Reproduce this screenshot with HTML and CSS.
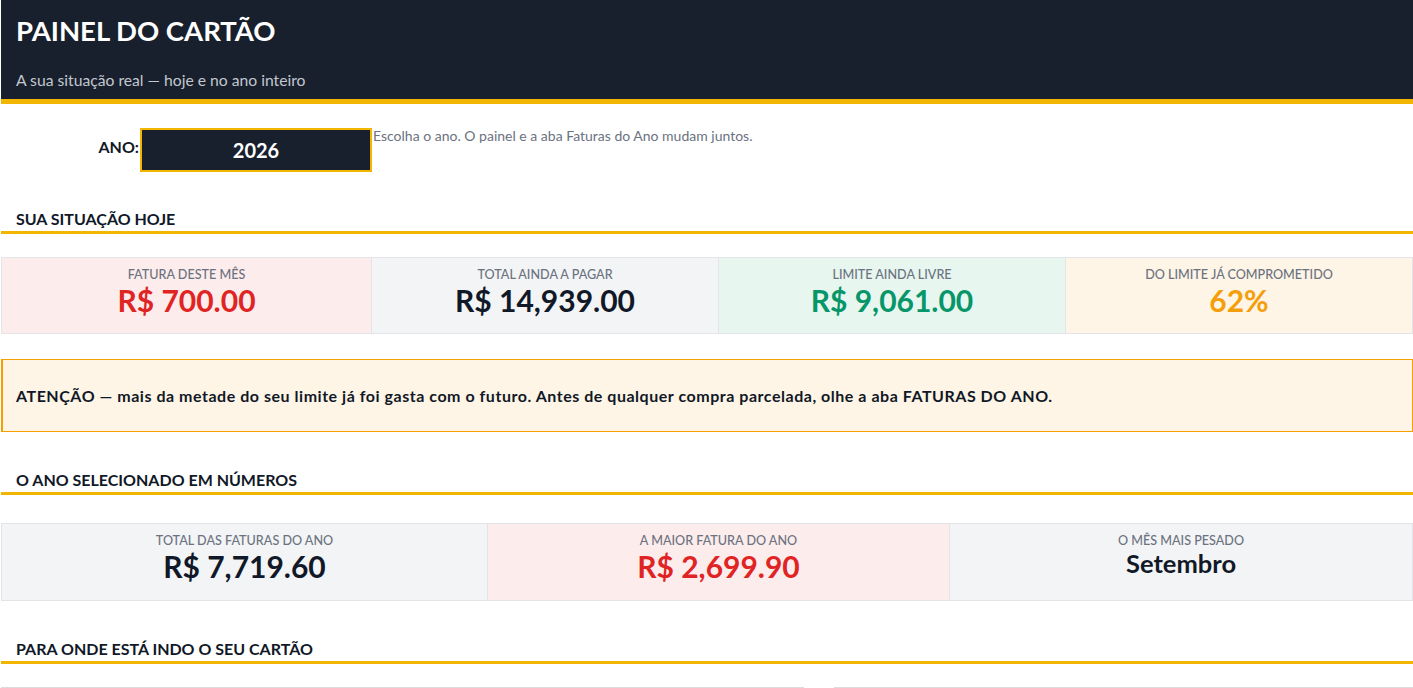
FILE: index.html
```html
<!DOCTYPE html>
<html lang="pt-BR">
<head>
    <meta charset="UTF-8">
    <title>Painel do Cartão</title>
    <link rel="stylesheet" href="styles.css">
</head>
<body>
    <div class="sheet">
        <header class="top">
            <h1>PAINEL DO CARTÃO</h1>
            <p>A sua situação real — hoje e no ano inteiro</p>
        </header>

        <div class="year-row">
            <span class="year-label">ANO:</span>
            <div class="year-box">2026</div>
            <span class="year-hint">Escolha o ano. O painel e a aba Faturas do Ano mudam juntos.</span>
        </div>

        <h2 class="section-title first">SUA SITUAÇÃO HOJE</h2>
        <div class="cards cards-today">
            <div class="card red">
                <span class="card-label">FATURA DESTE MÊS</span>
                <span class="card-value">R$ 700.00</span>
            </div>
            <div class="card gray">
                <span class="card-label">TOTAL AINDA A PAGAR</span>
                <span class="card-value">R$ 14,939.00</span>
            </div>
            <div class="card green">
                <span class="card-label">LIMITE AINDA LIVRE</span>
                <span class="card-value">R$ 9,061.00</span>
            </div>
            <div class="card orange">
                <span class="card-label">DO LIMITE JÁ COMPROMETIDO</span>
                <span class="card-value">62%</span>
            </div>
        </div>

        <div class="alert">
            ATENÇÃO — mais da metade do seu limite já foi gasta com o futuro. Antes de qualquer compra parcelada, olhe a aba FATURAS DO ANO.
        </div>

        <h2 class="section-title">O ANO SELECIONADO EM NÚMEROS</h2>
        <div class="cards cards-year">
            <div class="card gray">
                <span class="card-label">TOTAL DAS FATURAS DO ANO</span>
                <span class="card-value">R$ 7,719.60</span>
            </div>
            <div class="card red">
                <span class="card-label">A MAIOR FATURA DO ANO</span>
                <span class="card-value">R$ 2,699.90</span>
            </div>
            <div class="card gray">
                <span class="card-label">O MÊS MAIS PESADO</span>
                <span class="card-value small">Setembro</span>
            </div>
        </div>

        <h2 class="section-title">PARA ONDE ESTÁ INDO O SEU CARTÃO</h2>
        <div class="charts">
            <div class="chart"></div>
            <div class="chart"></div>
        </div>
    </div>
</body>
</html>
```

FILE: styles.css
```css
* {
    margin: 0;
    padding: 0;
    box-sizing: border-box;
}

body {
    font-family: 'Lato', 'Liberation Sans', sans-serif;
    background-color: #ffffff;
    color: #111827;
}

.sheet {
    padding-left: 1px;
}

.top {
    background-color: #18202d;
    border-bottom: 5px solid #f2b600;
    height: 104px;
    padding: 14px 15px 0;
}

.top h1 {
    color: #ffffff;
    font-size: 27.5px;
    line-height: 34px;
    font-weight: 700;
}

.top p {
    color: #c3c7cf;
    font-size: 15.7px;
    line-height: 18px;
    margin-top: 23px;
}

.year-row {
    display: flex;
    align-items: center;
    margin-top: 24px;
}

.year-label {
    width: 138px;
    text-align: right;
    font-weight: 700;
    font-size: 16px;
    padding-bottom: 8px;
}

.year-box {
    width: 232px;
    height: 44px;
    margin-left: 1px;
    background-color: #18202d;
    border: 2px solid #f2b600;
    color: #ffffff;
    font-size: 20px;
    font-weight: 700;
    display: flex;
    align-items: center;
    justify-content: center;
}

.year-hint {
    align-self: flex-start;
    font-size: 14px;
    line-height: 16px;
    color: #6b7280;
    margin-left: 1px;
}

.section-title {
    font-size: 16px;
    line-height: 18px;
    font-weight: 700;
    color: #111827;
    padding: 0 15px 3px;
    border-bottom: 3px solid #f2b600;
    margin-top: 39px;
}

.section-title.first {
    margin-top: 38px;
}

.cards {
    display: grid;
    margin-top: 23px;
    border: 1px solid #e2e4e8;
}

.cards-today {
    grid-template-columns: 369px 347px 347px 1fr;
    height: 77px;
}

.cards-year {
    grid-template-columns: 485px 462px 1fr;
    height: 78px;
    margin-top: 28px;
}

.card {
    display: flex;
    flex-direction: column;
    align-items: center;
    padding-top: 9px;
    border-left: 1px solid #e2e4e8;
}

.card:first-child {
    border-left: none;
}

.card-label {
    font-size: 12.6px;
    line-height: 15px;
    color: #6b7280;
    font-weight: 500;
}

.card-value {
    font-size: 30px;
    line-height: 34px;
    font-weight: 700;
    margin-top: 1px;
}

.card-value.small {
    font-size: 25.5px;
    line-height: 28px;
}

.red { background-color: #fdecec; }
.red .card-value { color: #e02424; }

.gray { background-color: #f3f4f6; }
.gray .card-value { color: #111827; }

.green { background-color: #e7f6ef; }
.green .card-value { color: #079669; }

.orange { background-color: #fef5e6; }
.orange .card-value { color: #f59e0b; }

.alert {
    margin-top: 25px;
    height: 73px;
    background-color: #fef5e6;
    border: 1px solid #f5a000;
    border-left-width: 2px;
    display: flex;
    align-items: center;
    padding-left: 13px;
    font-size: 16px;
    letter-spacing: 0.53px;
    font-weight: 700;
    color: #111827;
}

.charts {
    display: grid;
    grid-template-columns: 803px 1fr;
    column-gap: 30px;
    margin-top: 23px;
}

.chart {
    height: 40px;
    border-top: 1px solid #dcdcdc;
}
```
